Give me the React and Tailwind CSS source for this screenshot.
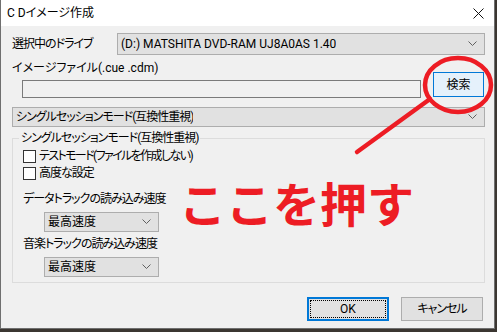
import React from "react";

const ui = "[font-family:Roboto,'Noto_Sans_CJK_JP',sans-serif] [font-feature-settings:'palt']";
const jp = "tracking-[-1px]";

function Chevron() {
  return (
    <svg width="9" height="6" viewBox="0 0 9 6" className="shrink-0">
      <polyline points="0.5,0.5 4.5,4.5 8.5,0.5" fill="none" stroke="#606060" strokeWidth="1" />
    </svg>
  );
}

function Combo({ label, className, textClass = "" }) {
  return (
    <div className={`flex items-center justify-between border border-[#adadad] bg-[#e1e1e1] pl-[3px] pr-[7px] ${className}`}>
      <span className={`truncate ${textClass}`}>{label}</span>
      <Chevron />
    </div>
  );
}

function Check({ label, textClass = jp }) {
  return (
    <div className="flex h-[16px] items-center">
      <span className="h-[13px] w-[13px] border border-[#333333] bg-white" />
      <span className={`ml-[3px] ${textClass}`}>{label}</span>
    </div>
  );
}

export default function App() {
  return (
    <div className={`relative h-[332px] w-[497px] overflow-hidden bg-[#3b3631] text-[12px] leading-[16px] text-black ${ui}`}>
      <div className="flex h-[329px] w-[495px] flex-col border-x border-b border-[#6f6f6f] bg-[#f0f0f0]">
        {/* title bar */}
        <div className="flex h-[26px] shrink-0 items-center justify-between bg-white pl-[6px] pr-[10px]">
          <span>C Dイメージ作成</span>
          <svg width="11" height="11" viewBox="0 0 11 11">
            <path d="M0.5 0.5 L10.5 10.5 M10.5 0.5 L0.5 10.5" stroke="#111" strokeWidth="1" />
          </svg>
        </div>

        <div className="flex flex-col pl-[11px] pr-[9px]">
          {/* drive */}
          <div className="mt-[7px] flex h-[22px] items-center justify-between">
            <span className={jp}>選択中のドライブ</span>
            <Combo label="(D:) MATSHITA DVD-RAM UJ8A0AS 1.40" className="h-[22px] w-[368px]" />
          </div>

          {/* image file */}
          <div className="mt-[5px] flex items-start justify-between">
            <div className="flex flex-col">
              <span>イメージファイル(.cue .cdm)</span>
              <div className="ml-[10px] mt-[4px] h-[18px] w-[399px] border border-[#7a7a7a] bg-[#f0f0f0]" />
            </div>
            <button className="mr-[1px] mt-[12px] flex h-[25px] w-[51px] items-center justify-center border border-[#0078d7] bg-[#e5f1fb]">
              検索
            </button>
          </div>

          {/* mode */}
          <Combo label="シングルセッションモード(互換性重視)" textClass={jp} className="mt-[9px] h-[20px] w-[473px]" />

          {/* group */}
          <div className="relative mt-[11px] flex h-[145px] w-[473px] flex-col border border-[#dcdcdc] pl-[10px] pt-[9px]">
            <span className={`absolute -top-[9px] left-[6px] bg-[#f0f0f0] px-[2px] ${jp}`}>シングルセッションモード(互換性重視)</span>
            <Check label="テストモード(ファイルを作成しない)" textClass="tracking-[-1.6px]" />
            <div className="mt-[1px]">
              <Check label="高度な設定" />
            </div>
            <span className={`mt-[10px] ${jp}`}>データトラックの読み込み速度</span>
            <Combo label="最高速度" className="ml-[21px] mt-[5px] h-[20px] w-[115px]" />
            <span className={`mt-[4px] ${jp}`}>音楽トラックの読み込み速度</span>
            <Combo label="最高速度" className="ml-[21px] mt-[5px] h-[20px] w-[115px]" />
          </div>

          {/* buttons */}
          <div className="mr-[2px] mt-[14px] flex justify-end gap-[12px]">
            <button className="flex h-[24px] w-[82px] items-center justify-center border-2 border-[#0078d7] bg-[#e1e1e1] p-[1px]">
              <span className="flex h-full w-full items-center justify-center border border-dotted border-black">OK</span>
            </button>
            <button className={`flex h-[24px] w-[82px] items-center justify-center border border-[#adadad] bg-[#e1e1e1] ${jp}`}>
              キャンセル
            </button>
          </div>
        </div>
      </div>

      {/* red annotation */}
      <svg className="pointer-events-none absolute left-0 top-0" width="497" height="332">
        <ellipse cx="458" cy="85" rx="33" ry="27" fill="none" stroke="#ed1c24" strokeWidth="4.5" />
        <line x1="357" y1="152" x2="430" y2="99" stroke="#ed1c24" strokeWidth="4.5" strokeLinecap="round" />
      </svg>
      <span className="pointer-events-none absolute left-[179px] top-[178px] text-[47px] font-bold leading-[47px] text-[#ed1c24] [font-family:'Noto_Sans_CJK_JP',sans-serif] [font-feature-settings:normal]">
        ここを押す
      </span>
    </div>
  );
}
